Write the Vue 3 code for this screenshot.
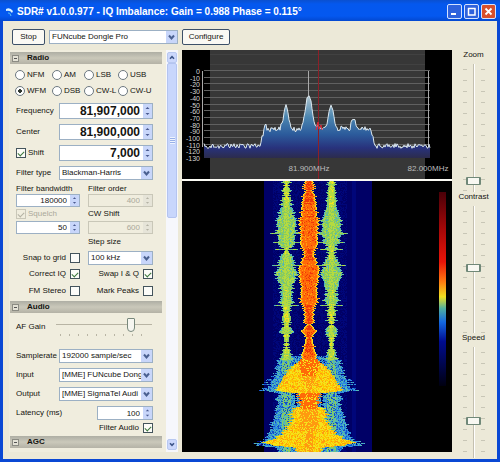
<script setup>
import { ref } from 'vue'

const title = 'SDR# v1.0.0.977 - IQ Imbalance: Gain = 0.988 Phase = 0.115°'
const device = ref('FUNcube Dongle Pro')
const modes = ['NFM', 'AM', 'LSB', 'USB', 'WFM', 'DSB', 'CW-L', 'CW-U']
const mode = ref('WFM')
const shiftOn = ref(true)
const squelch = ref(true)
const tuning = [
  { id: 'frequency', label: 'Frequency', value: '81,907,000' },
  { id: 'center', label: 'Center', value: '81,900,000' },
  { id: 'shift', label: 'Shift', value: '7,000', check: true }
]
const toggles = ref([
  { id: 'correct', label: 'Correct IQ', on: true },
  { id: 'swap', label: 'Swap I & Q', on: true },
  { id: 'stereo', label: 'FM Stereo', on: false },
  { id: 'peaks', label: 'Mark Peaks', on: false }
])
const audio = [
  { id: 'rate', label: 'Samplerate', value: '192000 sample/sec' },
  { id: 'input', label: 'Input', value: '[MME] FUNcube Dong' },
  { id: 'output', label: 'Output', value: '[MME] SigmaTel Audi' }
]
const sliders = ref([
  { id: 'zoom', label: 'Zoom', value: 6, size: 142 },
  { id: 'contrast', label: 'Contrast', value: 51, size: 141 },
  { id: 'speed', label: 'Speed', value: 32, size: 125 }
])

// Repeatable noise source
let seed = 1977
function rnd() {
  seed = (seed * 1664525 + 1013904223) % 4294967296
  return seed / 4294967296
}

// Linear interpolation over [position, value] pairs
function lerp(points, t) {
  if (t <= points[0][0]) return points[0][1]
  for (let i = 1; i < points.length; i++) {
    const [a, va] = points[i - 1]
    const [b, vb] = points[i]
    if (t <= b) return va + ((vb - va) * (t - a)) / (b - a)
  }
  return points[points.length - 1][1]
}

// Spectrum trace
const levels = [
  [22, 96], [78, 96], [80, 88], [82, 80], [83.5, 73], [85, 80], [90, 79], [98, 79], [101, 70],
  [102.5, 59], [104, 55], [105.5, 59], [107, 70], [110, 78], [116, 80], [120, 77], [123, 62],
  [125, 48], [127, 46], [129, 51], [131, 66], [133, 76], [136, 76], [141, 79], [145, 74], [147, 62],
  [149, 55], [151, 60], [153, 73], [155, 79], [161, 77], [168, 79], [170, 70], [172, 69], [173, 70],
  [175, 79], [188, 79], [191, 88], [193, 96], [248, 96]
]
const tracePoints = []
for (let x = 22; x <= 248; x++) {
  const y = lerp(levels, x)
  const jitter = y > 74 ? 5 : 1
  tracePoints.push(`${x},${(y + (rnd() - 0.5) * jitter).toFixed(1)}`)
}
const trace = tracePoints.join(' ')
const area = `22,108 ${trace} 248,108`
const scale = Array.from({ length: 14 }, (_, i) => ({ text: i ? `-${i * 10}` : '0', y: 21 + i * 6.7 }))

// Waterfall, one colour path per level
const palette = {
  navy: '#000066', blue: '#00067a', azure: '#1450c8', sky: '#2c8be0', cyan: '#55b8b4',
  green: '#86cb62', lime: '#b5da40', yellow: '#f4e21c', gold: '#ffc400', amber: '#ff9a10',
  orange: '#ff6a08', red: '#ee3608', crimson: '#cf2008'
}
const centreWidth = [
  [0, 4], [12, 5], [20, 7], [34, 8], [40, 10], [48, 9], [60, 9], [66, 7], [71, 4], [76, 6], [84, 9],
  [94, 10], [104, 8], [112, 8], [120, 9], [125, 5], [138, 5], [144, 3], [147, 6], [150, 8], [153, 5],
  [156, 3], [165, 5], [172, 7], [178, 9], [184, 15], [190, 22], [200, 28], [208, 34], [210, 28],
  [212, 10], [224, 9], [230, 18], [240, 17], [250, 24], [258, 36], [261, 46], [264, 36], [266, 16], [270, 12]
]
const sideWidth = [
  [0, 3], [14, 4], [28, 6], [38, 10], [46, 9], [52, 10], [62, 8], [70, 3], [76, 6], [84, 8], [94, 11],
  [102, 7], [112, 6], [120, 7], [125, 4], [138, 4], [144, 2], [147, 5], [150, 7], [153, 5], [156, 2],
  [166, 3], [174, 5], [184, 9], [200, 14], [210, 18], [212, 8], [224, 9], [240, 14], [258, 20], [270, 8]
]
const haloWidth = [
  [172, 0], [176, 26], [190, 33], [200, 39], [207, 46], [209, 50], [211, 30], [224, 28], [240, 30],
  [250, 36], [260, 50], [264, 56], [267, 28], [270, 24]
]
const paths = Object.fromEntries(Object.keys(palette).map((k) => [k, '']))

function rowShape(y) {
  const streak = y % 2 ? 1 : 0.2
  const wide = rnd() > 0.93 ? 7 : 0
  return {
    centre: lerp(centreWidth, y) + (rnd() - 0.4) * (y > 210 ? 7 : 4) * streak,
    left: lerp(sideWidth, y) + (rnd() - 0.5) * 5 * streak + (y > 32 && y < 125 ? wide : 0),
    right: lerp(sideWidth, y) + (rnd() - 0.5) * 5 * streak + (y > 32 && y < 125 ? wide : 0),
    halo: y > 172 ? lerp(haloWidth, y) + (rnd() - 0.5) * 11 : 0
  }
}

function colourAt(x, y, row) {
  const d = Math.abs(x - 126.5)
  const n = rnd()
  if (d < row.centre) {
    if (y < 178) {
      const edge = row.centre - d
      if (edge < 1) return 'yellow'
      if (edge < 2) return 'amber'
      if (row.centre < 7) return n > 0.7 ? 'orange' : 'red'
      return n > 0.9 ? 'amber' : n > 0.14 ? 'orange' : 'red'
    }
    const core = y < 212 ? Math.max(0, 12 - (y - 178) * 0.3) : y < 225 ? 12 : y < 250 ? 9 : 4
    if (d < core && n > 0.28) return y < 195 || (y > 211 && y < 228) ? 'orange' : 'amber'
    return n > 0.82 ? 'amber' : n > 0.42 ? 'gold' : row.centre - d < 2 ? 'lime' : 'yellow'
  }
  const isLeft = x < 126.5
  const ds = Math.abs(x - (isLeft ? 104 : 149))
  const ws = isLeft ? row.left : row.right
  if (ds < ws) {
    if (y > 178) {
      if (ds < 5 && n > 0.25) return n > 0.6 ? 'green' : 'cyan'
      return n > 0.62 ? 'cyan' : n > 0.2 ? 'sky' : 'azure'
    }
    if (ws - ds < 1.2) return ws > 5 ? 'cyan' : 'green'
    if (ds < 3) return n > 0.35 ? 'lime' : ws < 5 ? 'yellow' : 'green'
    return n > 0.5 ? 'green' : n > 0.2 ? 'lime' : 'cyan'
  }
  if (d < row.halo) {
    if (y > 211 && y < 226 && d < 18 && d > 12) return 'navy'
    return n > 0.7 ? 'cyan' : n > 0.35 ? 'sky' : n > 0.1 ? 'azure' : 'blue'
  }
  if (x >= 82 && x <= 189) return x > 169 && x < 174 ? 'blue' : x > 90 && x < 165 && n > 0.5 ? 'blue' : 'navy'
  return ''
}

for (let y = 0; y < 271; y++) {
  const row = rowShape(y)
  let start = 0
  let current = ''
  for (let x = 60; x <= 215; x++) {
    const c = colourAt(x, y, row)
    if (c !== current) {
      if (current) paths[current] += `M${start} ${y}h${x - start}v1h${start - x}z`
      start = x
      current = c
    }
  }
}
const layers = Object.keys(palette).map((k) => ({ fill: palette[k], d: paths[k] }))
</script>

<template>
  <div class="window">
    <header class="titlebar">
      <svg class="app-icon" viewBox="0 0 10 10" aria-hidden="true">
        <path d="M1 2 Q5 0 8 4 L7 6 Q5 3 1 4z" fill="#d8f2ff" />
        <path d="M3 6 Q5 5 6 9" fill="none" stroke="#58c0f0" />
      </svg>
      <h1>{{ title }}</h1>
      <button class="caption" aria-label="Minimize">
        <svg viewBox="0 0 13 13"><path d="M3 9h5" stroke="#fff" stroke-width="2" /></svg>
      </button>
      <button class="caption" aria-label="Maximize">
        <svg viewBox="0 0 13 13"><path d="M3 3.5h7.500M3.500 3v7h6.500V3" fill="none" stroke="#fff" stroke-width="1.5" /></svg>
      </button>
      <button class="caption close" aria-label="Close">
        <svg viewBox="0 0 13 13"><path d="M3.500 3.500l6 6M9.500 3.500l-6 6" stroke="#fff" stroke-width="1.8" /></svg>
      </button>
    </header>

    <div class="body">
      <div class="toolbar">
        <button class="push stop">Stop</button>
        <span class="combo device">
          <select v-model="device" aria-label="Device"><option>FUNcube Dongle Pro</option></select>
          <svg viewBox="0 0 11 12"><path d="M3 4.500l2.500 3 2.500-3" /></svg>
        </span>
        <button class="push configure">Configure</button>
      </div>

      <main class="main">
        <section class="panel">
          <div class="form">
            <h2><span class="fold"></span>Radio</h2>
            <div class="modes">
              <label v-for="m in modes" :key="m"><input v-model="mode" type="radio" name="mode" :value="m" />{{ m }}</label>
            </div>
            <div class="fields">
              <div v-for="t in tuning" :key="t.id" class="field">
                <label v-if="t.check" class="tick"><input v-model="shiftOn" type="checkbox" />Shift</label>
                <label v-else :for="t.id">{{ t.label }}</label>
                <span class="spin big">
                  <input :id="t.id" type="text" :value="t.value" :aria-label="t.label" />
                  <svg viewBox="0 0 9 14"><path d="M2.500 5l2-2 2 2zM2.500 9l2 2 2-2z" /></svg>
                </span>
              </div>
              <div class="field">
                <label for="filter">Filter type</label>
                <span class="combo">
                  <select id="filter"><option>Blackman-Harris</option></select>
                  <svg viewBox="0 0 11 12"><path d="M3 4.500l2.500 3 2.500-3" /></svg>
                </span>
              </div>
            </div>
            <div class="pairs">
              <label for="bw">Filter bandwidth</label>
              <label for="order">Filter order</label>
              <span class="spin">
                <input id="bw" type="text" value="180000" />
                <svg viewBox="0 0 9 14"><path d="M2.500 5l2-2 2 2zM2.500 9l2 2 2-2z" /></svg>
              </span>
              <span class="spin off">
                <input id="order" type="text" value="400" disabled />
                <svg viewBox="0 0 9 14"><path d="M2.500 5l2-2 2 2zM2.500 9l2 2 2-2z" /></svg>
              </span>
              <label class="tick off"><input v-model="squelch" type="checkbox" disabled />Squelch</label>
              <label for="cw">CW Shift</label>
              <span class="spin">
                <input type="text" value="50" aria-label="Squelch level" />
                <svg viewBox="0 0 9 14"><path d="M2.500 5l2-2 2 2zM2.500 9l2 2 2-2z" /></svg>
              </span>
              <span class="spin off">
                <input id="cw" type="text" value="600" disabled />
                <svg viewBox="0 0 9 14"><path d="M2.500 5l2-2 2 2zM2.500 9l2 2 2-2z" /></svg>
              </span>
              <label class="second" for="step">Step size</label>
              <label class="tick end">Snap to grid<input type="checkbox" /></label>
              <span class="combo">
                <select id="step"><option>100 kHz</option></select>
                <svg viewBox="0 0 11 12"><path d="M3 4.500l2.500 3 2.500-3" /></svg>
              </span>
              <label v-for="t in toggles" :key="t.id" class="tick end">{{ t.label }}<input v-model="t.on" type="checkbox" /></label>
            </div>

            <h2><span class="fold"></span>Audio</h2>
            <div class="gain">
              <label for="gain">AF Gain</label>
              <input id="gain" type="range" value="81" />
            </div>
            <div class="fields">
              <div v-for="a in audio" :key="a.id" class="field">
                <label :for="a.id">{{ a.label }}</label>
                <span class="combo">
                  <select :id="a.id"><option>{{ a.value }}</option></select>
                  <svg viewBox="0 0 11 12"><path d="M3 4.500l2.500 3 2.500-3" /></svg>
                </span>
              </div>
              <div class="field latency">
                <label for="latency">Latency (ms)</label>
                <span class="spin">
                  <input id="latency" type="text" value="100" />
                  <svg viewBox="0 0 9 14"><path d="M2.500 5l2-2 2 2zM2.500 9l2 2 2-2z" /></svg>
                </span>
              </div>
            </div>
            <label class="tick end last">Filter Audio<input type="checkbox" checked /></label>
            <h2><span class="fold"></span>AGC</h2>
          </div>
          <div class="scrollbar">
            <button aria-label="Scroll up"><svg viewBox="0 0 10 10"><path d="M2.500 6.500L5 4l2.500 2.500" /></svg></button>
            <div class="thumb"></div>
            <button aria-label="Scroll down"><svg viewBox="0 0 10 10"><path d="M2.500 3.500L5 6l2.500-2.500" /></svg></button>
          </div>
        </section>

        <section class="views">
          <svg class="view" viewBox="0 0 270 129">
            <defs>
              <linearGradient id="fill" gradientUnits="userSpaceOnUse" x1="0" y1="45" x2="0" y2="108">
                <stop offset="0" stop-color="#b4c8d0" />
                <stop offset="0.35" stop-color="#4c86b0" />
                <stop offset="0.62" stop-color="#2c5c9c" />
                <stop offset="0.84" stop-color="#28327c" />
                <stop offset="1" stop-color="#2c2c4c" />
              </linearGradient>
            </defs>
            <rect width="270" height="129" fill="#000" />
            <rect x="28" width="215" height="129" fill="#373737" />
            <path d="M28 4.500h215M28 14.500h215" stroke="#414141" />
            <path v-for="s in scale.slice(0, 12)" :key="s.text" :d="`M22 ${Math.round(s.y) - 0.5}H248`" stroke="#606060" />
            <path d="M20.500 21v76M126.500 21v26M246.500 21v75" stroke="#aaa" />
            <polygon :points="area" fill="url(#fill)" />
            <polyline :points="trace" fill="none" stroke="#dce8f0" stroke-width="1" />
            <path d="M136.500 0v129" stroke="#8c2028" />
            <path d="M134 80l2-8 1 7 2-4 1 5" fill="none" stroke="#e02838" />
            <g class="axis">
              <text v-for="s in scale" :key="s.text" x="18" :y="s.y + 3" text-anchor="end">{{ s.text }}</text>
              <text class="mhz" x="127" y="121" text-anchor="middle">81.900MHz</text>
              <text class="mhz" x="246" y="121" text-anchor="middle">82.000MHz</text>
            </g>
          </svg>
          <svg class="view" viewBox="0 0 270 271" preserveAspectRatio="none">
            <defs>
              <linearGradient id="legend" x1="0" y1="0" x2="0" y2="1">
                <stop offset="0" stop-color="#4a0008" />
                <stop offset="0.2" stop-color="#a80808" />
                <stop offset="0.36" stop-color="#e81408" />
                <stop offset="0.46" stop-color="#ff7810" />
                <stop offset="0.54" stop-color="#f0e020" />
                <stop offset="0.6" stop-color="#50b0a0" />
                <stop offset="0.67" stop-color="#1468e0" />
                <stop offset="0.77" stop-color="#000c90" />
                <stop offset="1" stop-color="#000010" />
              </linearGradient>
            </defs>
            <rect width="270" height="271" fill="#000" />
            <path v-for="l in layers" :key="l.fill" :d="l.d" :fill="l.fill" />
            <rect x="257" y="11" width="7" height="194" fill="url(#legend)" />
          </svg>
        </section>

        <aside class="sliders">
          <div v-for="s in sliders" :key="s.id" class="slider" :style="{ flexGrow: s.size }">
            <label :for="s.id">{{ s.label }}</label>
            <input :id="s.id" v-model="s.value" type="range" />
          </div>
        </aside>
      </main>
    </div>
  </div>
</template>

<style>
body {
  margin: 0;
}
</style>

<style scoped>
* {
  box-sizing: border-box;
}
.window {
  display: flex;
  flex-direction: column;
  min-height: 100vh;
  padding: 0 3px 3px;
  background: #0a48d4;
  color: #141410;
  font: 8px/10px "Liberation Sans", sans-serif;
}
button,
input,
select {
  margin: 0;
  font: inherit;
  color: inherit;
}
.titlebar {
  display: flex;
  align-items: center;
  gap: 2px;
  height: 21px;
  margin: 0 -3px;
  padding: 2px 4px 0 5px;
  background: linear-gradient(#0a50d0, #0458ee 4px, #0458f0 16px, #0348d0);
}
.app-icon {
  width: 10px;
  height: 12px;
}
h1 {
  flex: 1;
  margin: 0;
  color: #fff;
  font: bold 10px/14px "Liberation Sans", sans-serif;
  white-space: nowrap;
}
.caption {
  width: 15px;
  height: 15px;
  padding: 0;
  border: 1px solid #d4e2ff;
  border-radius: 2px;
  background: #2f62dc;
}
.caption.close {
  background: #d8502c;
}
.caption svg {
  display: block;
  width: 13px;
  height: 13px;
}
.body {
  display: flex;
  flex: 1;
  flex-direction: column;
  background: #ece9d8;
}
.toolbar {
  display: flex;
  align-items: center;
  gap: 4px;
  padding: 8px 9px 5px;
}
.push {
  height: 16px;
  padding: 0;
  border: 1px solid #3c5068;
  border-radius: 2px;
  background: #faf9f4;
}
.stop {
  width: 33px;
}
.configure {
  width: 48px;
}
.device {
  width: 129px;
}
.main {
  display: grid;
  flex: 1;
  grid-template-columns: 169px 1fr 35px;
  gap: 4px;
  padding: 0 6px 1px;
}
.panel {
  display: flex;
  margin-bottom: 6px;
  background: #f0edde;
}
.form {
  flex: 1;
  min-width: 0;
  padding: 2px 4px 0 1px;
}
h2 {
  display: flex;
  align-items: center;
  gap: 8px;
  height: 12px;
  margin: 0;
  padding-left: 2px;
  background: linear-gradient(#aeaea4, #cac8ba 6px, #b4b2a6);
  font: bold 8px/12px "Liberation Sans", sans-serif;
}
.fold {
  width: 7px;
  height: 7px;
  border: 1px solid #8c8c84;
  background: linear-gradient(#555, #555) center / 3px 1px no-repeat #e4e2d6;
}
.modes {
  display: grid;
  grid-template-columns: 37px 32px 34px 1fr;
  grid-auto-rows: 16px;
  padding: 3px 0 4px 5px;
}
.modes label,
.tick {
  display: flex;
  align-items: center;
  gap: 2px;
  white-space: nowrap;
}
input[type="radio"] {
  flex: none;
  width: 10px;
  height: 10px;
  border: 1px solid #6c7880;
  border-radius: 50%;
  background: #fff;
  appearance: none;
}
input[type="radio"]:checked {
  background: radial-gradient(circle, #303830 2px, #fff 2px);
}
input[type="checkbox"] {
  display: grid;
  flex: none;
  place-items: center;
  width: 10px;
  height: 10px;
  border: 1px solid #44545c;
  background: #fcfcf8;
  appearance: none;
}
input[type="checkbox"]:checked::after {
  width: 5px;
  height: 3px;
  border: solid #3c783c;
  border-width: 0 0 1px 1px;
  content: "";
  transform: rotate(-45deg);
}
.tick.end {
  justify-content: flex-end;
  gap: 4px;
}
.fields {
  display: grid;
  gap: 5px;
  padding: 0 9px 0 6px;
}
.field {
  display: grid;
  grid-template-columns: 43px 1fr;
  align-items: center;
  white-space: nowrap;
}
.field.latency {
  grid-template-columns: 1fr 56px;
}
.spin,
.combo {
  display: grid;
  min-width: 0;
  height: 14px;
  border: 1px solid #9cb0c4;
  background: #fff;
}
.spin > *,
.combo > * {
  grid-area: 1 / 1;
}
.spin input {
  width: 100%;
  min-width: 0;
  height: 100%;
  padding: 0 12px 0 2px;
  border: 0;
  background: none;
  text-align: right;
}
.spin svg,
.combo svg {
  align-self: center;
  justify-self: end;
  height: 100%;
  background: #c8d6fa;
  pointer-events: none;
}
.spin svg {
  width: 9px;
  fill: #4a5a90;
}
.combo svg {
  width: 11px;
  fill: none;
  stroke: #4a6090;
  stroke-width: 2;
}
.spin.big {
  height: 16px;
  font: bold 12px/14px "Liberation Sans", sans-serif;
}
.combo select {
  width: 100%;
  min-width: 0;
  height: 12px;
  padding: 0 11px 0 2px;
  border: 0;
  background: none;
  line-height: 12px;
  appearance: none;
}
.pairs {
  display: grid;
  grid-template-columns: 64px 65px;
  grid-template-rows: 11px 13px 14px 13px 16px 15px 18px 15px;
  column-gap: 8px;
  align-items: center;
  padding: 3px 0 3px 6px;
  white-space: nowrap;
}
.pairs .spin {
  height: 13px;
}
.second {
  grid-column: 2;
}
.off,
.off input,
.off input[type="checkbox"] {
  border-color: #c9c7b8;
  background: transparent;
  color: #aaa89a;
}
.off svg {
  background: #e6e4d8;
  fill: #b4b2a4;
}
.off input[type="checkbox"]:checked::after {
  border-color: #b4b2a4;
}
.gain {
  display: grid;
  grid-template-columns: 40px 1fr;
  align-items: center;
  height: 36px;
  padding: 0 10px 8px 6px;
}
input[type="range"] {
  background: none;
  appearance: none;
}
.gain input {
  width: 100%;
  height: 22px;
  background:
    linear-gradient(#b8b4a4, #b8b4a4) 0 8px / 100% 1px no-repeat,
    repeating-linear-gradient(90deg, #b8b4a4 0 1px, transparent 1px 9px) 4px 18px / 90px 2px no-repeat;
}
.gain input::-webkit-slider-thumb {
  width: 8px;
  height: 14px;
  margin-top: -4px;
  border: 1px solid #78887c;
  border-radius: 1px 1px 4px 4px;
  background: #f6f6f0;
  appearance: none;
}
.last {
  height: 16px;
  padding-right: 9px;
}
.scrollbar {
  display: flex;
  flex-direction: column;
  width: 12px;
  padding: 2px 1px;
  background: #f6f7fc;
}
.scrollbar button {
  height: 11px;
  padding: 0;
  border: 1px solid #b8c8f0;
  border-radius: 2px;
  background: #ccd8fc;
}
.scrollbar button:last-child {
  margin-top: auto;
}
.scrollbar svg {
  display: block;
  width: 8px;
  height: 9px;
  fill: none;
  stroke: #3c5488;
  stroke-width: 2;
}
.thumb {
  flex: 0 0 39%;
  border: 1px solid #b4c4f0;
  border-radius: 2px;
  background:
    repeating-linear-gradient(#eef4ff 0 1px, #98b0e8 1px 2px) center / 5px 7px no-repeat,
    #c8d6fc;
}
.views {
  display: grid;
  grid-template-rows: 129fr 271fr;
  gap: 2px;
  margin-bottom: 6px;
  background: #fbfaf4;
}
.view {
  display: block;
  width: 100%;
  height: 100%;
  min-height: 0;
  background: #000;
}
.axis {
  fill: #d4d4d4;
  font: 7px "Liberation Sans", sans-serif;
}
.mhz {
  fill: #bcbcbc;
  font-size: 8px;
}
.sliders {
  display: flex;
  flex-direction: column;
}
.slider {
  display: flex;
  flex: 1 1 0;
  flex-direction: column;
  align-items: center;
  gap: 4px;
  min-height: 0;
}
.slider input {
  flex: 1;
  width: 26px;
  min-height: 0;
  margin: 0;
  background:
    linear-gradient(90deg, #c4c0b0 1px, #fff 1px) center / 2px 100% no-repeat,
    repeating-linear-gradient(transparent 0 5px, #c8c6b6 5px 6px, transparent 6px 11px) 2px 0 / 4px 100% no-repeat,
    repeating-linear-gradient(transparent 0 5px, #c8c6b6 5px 6px, transparent 6px 11px) 20px 0 / 4px 100% no-repeat;
  writing-mode: vertical-lr;
  direction: rtl;
}
.slider input::-webkit-slider-thumb {
  width: 15px;
  height: 8px;
  border: 1px solid #708878;
  border-width: 1px 2px;
  border-radius: 1px;
  background: #f8f8f2;
  appearance: none;
}
</style>
